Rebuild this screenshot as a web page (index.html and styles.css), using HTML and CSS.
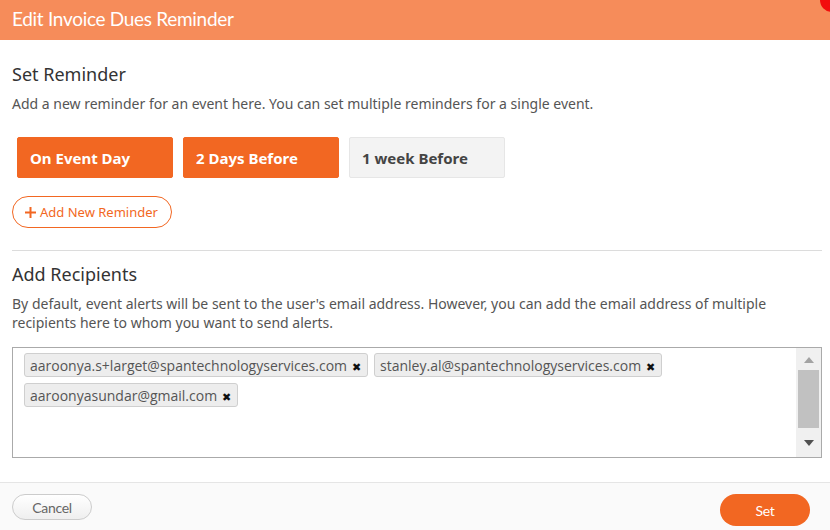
FILE: index.html
```html
<!DOCTYPE html>
<html>
<head>
<meta charset="utf-8">
<link rel="stylesheet" href="styles.css">
</head>
<body>
<div class="modal">
  <div class="header">
    <div class="title">Edit Invoice Dues Reminder</div>
    <span class="close-dot"></span>
  </div>
  <div class="content">
    <h2 class="heading">Set Reminder</h2>
    <p class="desc">Add a new reminder for an event here. You can set multiple reminders for a single event.</p>
    <div class="options">
      <div class="opt active">On Event Day</div>
      <div class="opt active">2 Days Before</div>
      <div class="opt">1 week Before</div>
    </div>
    <div class="add-wrap">
      <button class="add-btn"><svg class="plus" width="11" height="11" viewBox="0 0 11 11"><rect x="4.5" y="0" width="2" height="11" fill="#f26722"/><rect x="0" y="4.5" width="11" height="2" fill="#f26722"/></svg>Add New Reminder</button>
    </div>
    <div class="divider"></div>
    <h2 class="heading heading2">Add Recipients</h2>
    <p class="desc desc2">By default, event alerts will be sent to the user's email address. However, you can add the email address of multiple recipients here to whom you want to send alerts.</p>
    <div class="recipients">
      <div class="chips">
        <span class="chip">aaroonya.s+larget@spantechnologyservices.com <span class="x">&#x2716;</span></span>
        <span class="chip">stanley.al@spantechnologyservices.com <span class="x">&#x2716;</span></span>
        <span class="chip">aaroonyasundar@gmail.com <span class="x">&#x2716;</span></span>
      </div>
      <div class="scrollbar">
        <span class="arrow up"></span>
        <span class="thumb"></span>
        <span class="arrow down"></span>
      </div>
    </div>
  </div>
  <div class="footer">
    <button class="cancel">Cancel</button>
    <button class="set">Set</button>
  </div>
</div>
</body>
</html>
```
FILE: styles.css
```css
* { box-sizing: border-box; }
html, body { margin: 0; padding: 0; background: #fff; }
body { width: 830px; height: 530px; overflow: hidden; font-family: "Noto Sans", Lato, sans-serif; }
.modal { display: flex; flex-direction: column; height: 530px; position: relative; }
.header {
  height: 40px; background: #f68c5a; display: flex; align-items: center;
  padding: 0 12px; position: relative; overflow: hidden; flex: none;
}
.title { color: #fff; font-family: Lato, sans-serif; font-size: 19px; letter-spacing: -0.3px; padding-bottom: 4px; }
.close-dot {
  position: absolute; right: -14px; top: -12px; width: 24px; height: 24px;
  border-radius: 50%; background: #f20d0d;
}
.content { padding: 0 8px 0 12px; flex: 1; }
.heading { margin: 23px 0 0; font-size: 18px; font-weight: 400; color: #333; line-height: 22px; }
.desc { margin: 9px 0 0; font-size: 14px; color: #555; line-height: 19px; }
.options { display: flex; gap: 10px; margin: 24px 0 0 5px; }
.opt {
  width: 156px; height: 41px; display: flex; align-items: center; padding-left: 12px;
  border-radius: 2px; font-size: 15px; font-weight: 700; color: #444;
  background: #f3f3f3; border: 1px solid #e6e6e6;
}
.opt.active { background: #f26722; color: #fff; border-color: #f26722; }
.add-wrap { margin-top: 18px; }
.add-btn {
  height: 32px; width: 160px; border: 1px solid #f26722; border-radius: 16px; background: #fff;
  color: #f26722; font-family: "Noto Sans", sans-serif; font-size: 13px; padding: 0 0 0 12px;
  display: flex; align-items: center; gap: 4px; cursor: pointer;
}
.plus { flex: none; margin-top: 1px; }
.divider { height: 1px; background: #dcdcdc; margin-top: 22px; }
.heading2 { margin-top: 12px; }
.desc2 { margin-top: 9px; }
.recipients {
  margin-top: 15px; height: 111px; border: 1px solid #aaa; display: flex; background: #fff;
}
.chips { flex: 1; padding: 5px 0 0 11px; display: flex; flex-wrap: wrap; align-content: flex-start; gap: 6px 6px; }
.chip {
  height: 24px; display: inline-flex; align-items: center; padding: 0 6px 0 5px;
  background: #ededed; border: 1px solid #cfcfcf; border-radius: 3px;
  font-family: "Open Sans", sans-serif; font-size: 14px; color: #555;
}
.x { font-size: 11px; color: #111; margin-left: 5px; margin-top: 3px; }
.scrollbar {
  width: 25px; background: #f0f0f0; display: flex; flex-direction: column; align-items: center;
  padding: 0 0; position: relative;
}
.arrow { width: 0; height: 0; border-left: 5px solid transparent; border-right: 5px solid transparent; }
.arrow.up { border-bottom: 6px solid #a3a3a3; margin-top: 9px; }
.arrow.down { border-top: 6px solid #505050; margin-top: 12px; }
.thumb { width: 21px; height: 58px; background: #c1c1c1; margin-top: 7px; }
.footer {
  height: 48px; flex: none; border-top: 1px solid #e5e5e5; background: #fafafa;
  display: flex; justify-content: space-between; align-items: flex-start; padding: 11px 20px 0 12px;
}
.cancel {
  height: 26px; width: 80px; border: 1px solid #ccc; border-radius: 13px;
  background: linear-gradient(#ffffff, #efefef); color: #666;
  font-family: Lato, sans-serif; font-size: 14px; padding: 0; letter-spacing: -0.3px;
}
.set {
  height: 32px; width: 90px; border: none; border-radius: 16px; background: #f26722; color: #fff;
  font-family: Lato, sans-serif; font-size: 14px; padding: 0; letter-spacing: -0.3px;
}
```
